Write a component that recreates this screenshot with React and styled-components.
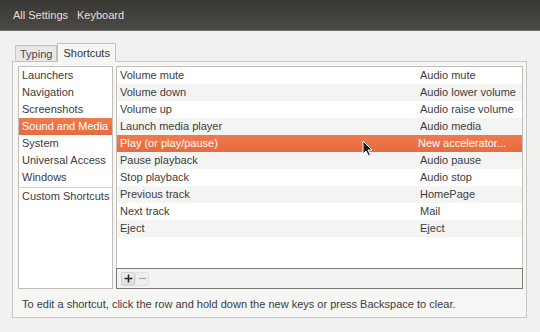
import React from 'react';
import styled, { createGlobalStyle } from 'styled-components';

const GlobalStyle = createGlobalStyle`
  html, body {
    margin: 0;
    padding: 0;
    background: #f2f1f0;
  }
  body {
    font-family: "Liberation Sans", Arial, sans-serif;
    font-size: 11px;
    color: #3c3c3c;
  }
`;

const Window = styled.div`
  width: 540px;
  height: 332px;
  display: flex;
  flex-direction: column;
  background: #f2f1f0;
  overflow: hidden;
`;

const HeaderBar = styled.div`
  height: 31px;
  display: flex;
  align-items: center;
  gap: 9px;
  padding: 0 0 0 13px;
  box-sizing: border-box;
  background: linear-gradient(#393834, #4b4944);
  border-bottom: 1px solid #76746f;
  color: #e2ded6;
  font-size: 11px;
`;

const Body = styled.div`
  flex: 1;
  display: flex;
  flex-direction: column;
  padding: 12px 13px 0 12px;
`;

const TabRow = styled.div`
  display: flex;
  align-items: flex-end;
  padding-left: 3px;
  margin-bottom: -1px;
  position: relative;
  z-index: 1;
`;

const Tab = styled.div`
  box-sizing: border-box;
  height: ${p => (p.active ? '19px' : '17px')};
  padding: 0 ${p => (p.active ? '5px' : '4px')};
  display: flex;
  align-items: center;
  border: 1px solid #c3c0bb;
  border-bottom: ${p => (p.active ? '1px solid #f6f6f5' : '1px solid #c3c0bb')};
  border-left: ${p => (p.active ? '1px solid #c3c0bb' : '1px solid #cdcac5')};
  background: ${p => (p.active ? '#f6f6f5' : '#e9e8e6')};
  color: ${p => (p.active ? '#333' : '#4a4a4a')};
  font-size: 11px;
  padding-top: ${p => (p.active ? '0' : '1px')};
`;

const Panel = styled.div`
  box-sizing: border-box;
  height: 257px;
  border: 1px solid #c9c6c1;
  background: #f6f6f5;
  display: flex;
  flex-direction: column;
  padding: 4px 3px 0 5px;
`;

const Content = styled.div`
  display: flex;
  gap: 3px;
  height: 223px;
`;

const SideList = styled.div`
  box-sizing: border-box;
  width: 95px;
  border: 1px solid #c1beb9;
  background: #fff;
  display: flex;
  flex-direction: column;
`;

const SideItem = styled.div`
  height: 17px;
  line-height: 17px;
  padding-left: 3px;
  white-space: nowrap;
  background: ${p => (p.selected ? 'linear-gradient(#ef7a4e, #e66b40)' : 'transparent')};
  color: ${p => (p.selected ? '#fff' : '#3c3c3c')};
`;

const SideDivider = styled.div`
  height: 1px;
  margin: 1px 0 0;
  background: #d4d1cc;
`;

const RightPane = styled.div`
  flex: 1;
  display: flex;
  flex-direction: column;
`;

const ShortcutList = styled.div`
  flex: 1;
  box-sizing: border-box;
  border: 1px solid #c1beb9;
  border-bottom: none;
  background: #fff;
  position: relative;
`;

const Row = styled.div`
  display: grid;
  grid-template-columns: 1fr 102px;
  height: 17px;
  line-height: 17px;
  white-space: nowrap;
  background: ${p =>
    p.selected ? 'linear-gradient(#ef7a4e, #e66b40)' : p.odd ? '#f4f4f3' : '#fff'};
  color: ${p => (p.selected ? '#fff' : '#3c3c3c')};
`;

const Cell = styled.span`
  padding-left: 3px;
  overflow: hidden;
`;

const KeyCell = styled.span`
  overflow: hidden;
  margin-left: ${p => (p.editing ? '-2px' : '0')};
`;

const Pointer = styled.svg`
  position: absolute;
  left: 245px;
  top: 73px;
  width: 11px;
  height: 17px;
`;

const Toolbar = styled.div`
  box-sizing: border-box;
  height: 21px;
  border: 1px solid #7b7a77;
  background: #f3f3f2;
  display: flex;
  align-items: center;
  padding-left: 4px;
  gap: 0;
`;

const ToolButton = styled.div`
  box-sizing: border-box;
  width: 14px;
  height: 14px;
  display: flex;
  align-items: center;
  justify-content: center;
  border: 1px solid ${p => (p.disabled ? '#e2e1df' : '#d3d1cd')};
  background: ${p => (p.disabled ? '#efefee' : 'linear-gradient(#f1f0ef, #dedcd9)')};
  border-radius: 2px;
`;

const Footer = styled.div`
  padding: 9px 0 0 4px;
  color: #3c3c3c;
  white-space: nowrap;
`;

const categories = [
  'Launchers',
  'Navigation',
  'Screenshots',
  'Sound and Media',
  'System',
  'Universal Access',
  'Windows',
];

const shortcuts = [
  ['Volume mute', 'Audio mute'],
  ['Volume down', 'Audio lower volume'],
  ['Volume up', 'Audio raise volume'],
  ['Launch media player', 'Audio media'],
  ['Play (or play/pause)', 'New accelerator...'],
  ['Pause playback', 'Audio pause'],
  ['Stop playback', 'Audio stop'],
  ['Previous track', 'HomePage'],
  ['Next track', 'Mail'],
  ['Eject', 'Eject'],
];

const SELECTED_ROW = 4;

export default function App() {
  return (
    <Window>
      <GlobalStyle />
      <HeaderBar>
        <span>All Settings</span>
        <span>Keyboard</span>
      </HeaderBar>
      <Body>
        <TabRow>
          <Tab>Typing</Tab>
          <Tab active>Shortcuts</Tab>
        </TabRow>
        <Panel>
          <Content>
            <SideList>
              {categories.map(c => (
                <SideItem key={c} selected={c === 'Sound and Media'}>
                  {c}
                </SideItem>
              ))}
              <SideDivider />
              <SideItem>Custom Shortcuts</SideItem>
            </SideList>
            <RightPane>
              <ShortcutList>
                {shortcuts.map(([name, key], i) => (
                  <Row key={name} odd={i % 2 === 1} selected={i === SELECTED_ROW}>
                    <Cell>{name}</Cell>
                    <KeyCell editing={i === SELECTED_ROW}>{key}</KeyCell>
                  </Row>
                ))}
                <Pointer viewBox="0 0 11 17">
                  <path
                    d="M1 1 L1 14 L4 11 L6.5 16 L8.5 15 L6 10 L10 10 Z"
                    fill="#1a1a1a"
                    stroke="#fff"
                    strokeWidth="1"
                    strokeLinejoin="round"
                  />
                </Pointer>
              </ShortcutList>
              <Toolbar>
                <ToolButton>
                  <svg width="9" height="9" viewBox="0 0 9 9">
                    <path d="M4.5 0.5 V8.5 M0.5 4.5 H8.5" stroke="#2a2a2a" strokeWidth="1.6" />
                  </svg>
                </ToolButton>
                <ToolButton disabled>
                  <svg width="9" height="9" viewBox="0 0 9 9">
                    <path d="M1 4.5 H8" stroke="#a8a7a4" strokeWidth="1.2" />
                  </svg>
                </ToolButton>
              </Toolbar>
            </RightPane>
          </Content>
          <Footer>
            To edit a shortcut, click the row and hold down the new keys or press Backspace to clear.
          </Footer>
        </Panel>
      </Body>
    </Window>
  );
}
